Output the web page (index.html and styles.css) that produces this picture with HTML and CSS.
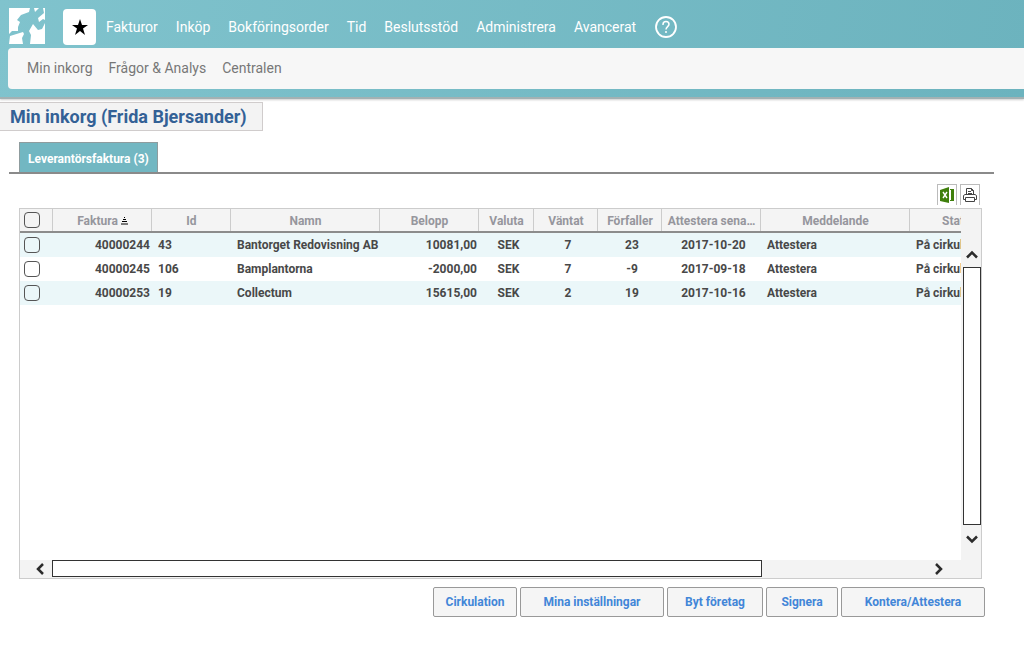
FILE: index.html
```html
<!DOCTYPE html>
<html lang="sv">
<head>
<meta charset="utf-8">
<title>Min inkorg</title>
<link rel="stylesheet" href="styles.css">
</head>
<body>
<header class="header">
  <div class="topbar">
    <svg class="logo" viewBox="0 0 36 36" aria-hidden="true">
      <path fill="#fff" d="M0 0H21L20 4L12 7L8 12L11 14L9 19V23L3 23L0 26ZM1 28L14 24L15 26L13 30L14 36H0ZM21 36L22 27L20 23L24 16L29 22L33 21L36 15V36ZM25 0H30L26 4ZM34 0H36V12L34 11L30 14L29 10L35 5Z"/>
    </svg>
    <button class="favorite" type="button" aria-label="Favoriter">
      <svg viewBox="0 0 18 18" width="18" height="18" aria-hidden="true"><path d="M9 1L11 7H17L12 10.500L14 17L9 13L4 17L6 10.500L1 7H7Z"/></svg>
    </button>
    <nav class="menu">
      <a href="#">Fakturor</a>
      <a href="#">Inköp</a>
      <a href="#">Bokföringsorder</a>
      <a href="#">Tid</a>
      <a href="#">Beslutsstöd</a>
      <a href="#">Administrera</a>
      <a href="#">Avancerat</a>
    </nav>
    <button class="help" type="button" aria-label="Hjälp">
      <svg viewBox="0 0 22 22" width="22" height="22" fill="none" stroke="#fff" aria-hidden="true"><circle cx="11" cy="11" r="10" stroke-width="1.800"/><path stroke-width="1.500" d="M8 9V8.500C8 4.500 14 4.700 14 8.300C14 10.500 11 10.800 11 13.500M11 15V17"/></svg>
    </button>
  </div>
  <nav class="submenu">
    <a href="#">Min inkorg</a>
    <a href="#">Frågor &amp; Analys</a>
    <a href="#">Centralen</a>
  </nav>
</header>
<main>
  <h1 class="title">Min inkorg (Frida Bjersander)</h1>
  <div class="tabs"><button class="tab" type="button">Leverantörsfaktura (3)</button></div>
  <section class="panel">
    <div class="tools">
      <button class="tool" type="button" aria-label="Exportera till Excel">
        <svg viewBox="0 0 16 16" width="16" height="16" aria-hidden="true"><path fill="#3f7f0c" d="M1 3L10 0V16L1 14ZM11 2H15V14H11Z"/><path fill="#fff" d="M11 3H12V13H11Z"/><path stroke="#fff" stroke-width="1.400" d="M4 5L8 11M8 5L4 11"/></svg>
      </button>
      <button class="tool" type="button" aria-label="Skriv ut">
        <svg viewBox="0 0 16 16" width="16" height="16" fill="none" stroke="#444" aria-hidden="true"><path d="M4.500 7.500V1.500H9.500L11.500 3.500V7.500M9.500 1.500V3.500H11.500M6 4.500H9M6 6.500H10M3.500 12.500H1.500V8.500L3 7.500H13L14.500 8.500V12.500H12.500M3.500 14.500V10.500H12.500V14.500Z"/></svg>
      </button>
    </div>
    <div class="grid">
      <div class="view">
        <div class="rows">
          <table class="table">
            <colgroup><col class="c-check"><col class="c-amount"><col class="c-id"><col class="c-name"><col class="c-amount"><col class="c-currency"><col class="c-wait"><col class="c-wait"><col class="c-amount"><col class="c-name"><col class="c-status"></colgroup>
            <thead>
              <tr><th><input type="checkbox" aria-label="Markera alla"></th><th>Faktura <svg class="sort" viewBox="0 0 7 8" width="7" height="8" aria-hidden="true"><path stroke="#000" d="M3 .5H4M2 2.500H5M1 4.500H6M0 7H7"/></svg></th><th>Id</th><th>Namn</th><th>Belopp</th><th>Valuta</th><th>Väntat</th><th>Förfaller</th><th>Attestera sena…</th><th>Meddelande</th><th>Status</th></tr>
            </thead>
            <tbody>
              <tr><td><input type="checkbox" aria-label="Markera 40000244"></td><td class="num">40000244</td><td>43</td><td>Bantorget Redovisning AB</td><td class="num">10081,00</td><td class="mid">SEK</td><td class="mid">7</td><td class="mid">23</td><td class="mid">2017-10-20</td><td>Attestera</td><td>På cirkulation</td></tr>
              <tr><td><input type="checkbox" aria-label="Markera 40000245"></td><td class="num">40000245</td><td>106</td><td>Bamplantorna</td><td class="num">-2000,00</td><td class="mid">SEK</td><td class="mid">7</td><td class="mid">-9</td><td class="mid">2017-09-18</td><td>Attestera</td><td>På cirkulation</td></tr>
              <tr><td><input type="checkbox" aria-label="Markera 40000253"></td><td class="num">40000253</td><td>19</td><td>Collectum</td><td class="num">15615,00</td><td class="mid">SEK</td><td class="mid">2</td><td class="mid">19</td><td class="mid">2017-10-16</td><td>Attestera</td><td>På cirkulation</td></tr>
            </tbody>
          </table>
        </div>
        <div class="hbar">
          <button class="arrow" type="button" aria-label="Vänster"><svg viewBox="0 0 12 12" width="12" height="12"><path d="M9 1L4 6L9 11"/></svg></button>
          <div class="htrack"><div class="hthumb"></div></div>
          <button class="arrow" type="button" aria-label="Höger"><svg viewBox="0 0 12 12" width="12" height="12"><path d="M3 1L8 6L3 11"/></svg></button>
        </div>
      </div>
      <div class="vbar">
        <button class="arrow" type="button" aria-label="Upp"><svg viewBox="0 0 12 12" width="12" height="12"><path d="M1 8.500L6 3.500L11 8.500"/></svg></button>
        <div class="vthumb"></div>
        <button class="arrow" type="button" aria-label="Ner"><svg viewBox="0 0 12 12" width="12" height="12"><path d="M1 3.500L6 8.500L11 3.500"/></svg></button>
      </div>
    </div>
  </section>
  <div class="actions">
    <button class="action" type="button">Cirkulation</button>
    <button class="action wide" type="button">Mina inställningar</button>
    <button class="action medium" type="button">Byt företag</button>
    <button class="action narrow" type="button">Signera</button>
    <button class="action wide" type="button">Kontera/Attestera</button>
  </div>
</main>
</body>
</html>
```

FILE: styles.css
```css
* { box-sizing: border-box; }
body { margin: 0; background: #fff; font-family: Roboto, "Liberation Sans", sans-serif; }
button { font-family: inherit; padding: 0; cursor: pointer; }
a { text-decoration: none; }
svg { display: block; }

.header {
  padding: 8px 0 8px 8px;
  background: linear-gradient(100deg, #80c3cd, #6cb3be);
  border-bottom: 2px solid #a3b1b3;
  box-shadow: 0 1px 2px #ccc;
}
.topbar { display: flex; align-items: center; height: 40px; padding-left: 1px; }
.logo { width: 36px; height: 36px; margin-bottom: 4px; }
.favorite {
  display: flex; align-items: center; justify-content: center;
  width: 33px; height: 36px; margin: 0 10px 2px 18px;
  background: #fff; border: 0; border-radius: 4px;
}
.menu { display: flex; gap: 18px; }
.menu a { color: #fff; font-size: 14px; line-height: 20px; margin-bottom: 2px; }
.help { margin: 0 0 3px 19px; border: 0; background: none; }
.submenu {
  display: flex; align-items: center; gap: 16px; height: 41px; padding: 0 0 1px 19px;
  background: #f7f7f7; border-radius: 4px 0 0 4px;
}
.submenu a { color: #777; font-size: 14px; }

.title {
  width: fit-content; margin: 3px 0 11px; padding: 0 15px 0 10px;
  font-size: 18px; font-weight: 700; line-height: 27px; color: #336196;
  background: #f3f3f3; border: 1px solid #d0cccc; border-left: 0;
}
.tabs { display: flex; margin: 0 30px 0 9px; padding-left: 10px; border-bottom: 2px solid #8a8a8a; }
.tab {
  height: 30px; padding: 2px 8px 0; color: #fff; background: #72b7c2;
  border: 1px solid #8f9c9e; border-bottom: 0; font-size: 12px; font-weight: 700;
}

.panel { margin: 10px 42px 0 19px; }
.tools { display: flex; justify-content: flex-end; gap: 3px; padding-right: 2px; height: 24px; }
.tool { width: 20px; height: 21px; padding: 1px; border: 1px solid #bbb; border-bottom: 0; background: #fff; }
.grid { display: flex; height: 371px; border: 1px solid #ccc; }
.view { flex: 1; min-width: 0; display: flex; flex-direction: column; }
.rows { flex: 1; overflow: hidden; }
.table { width: 989px; table-layout: fixed; border-collapse: separate; border-spacing: 0; font-size: 12px; font-weight: 700; color: #484848; }
.c-check { width: 33px; }
.c-amount { width: 99px; }
.c-id { width: 79px; }
.c-name { width: 149px; }
.c-currency { width: 55px; }
.c-wait { width: 64px; }
.c-status { width: 99px; }
th, td { padding: 0 0 0 6px; overflow: hidden; white-space: nowrap; text-overflow: ellipsis; }
th { height: 24px; padding: 1px 4px 0; text-align: center; color: #96969d; background: linear-gradient(90deg, #f4f4f4 calc(100% - 1px), #ccc 0); border-bottom: 2px solid #8c8c8c; }
td { height: 24px; text-align: left; }
th:first-child, td:first-child { padding: 0 0 0 4px; text-align: left; }
tbody tr:nth-child(odd) { background: #ebf7f9; }
.table .num { padding-right: 2px; text-align: right; }
.table .mid { padding: 0 2px 0 6px; text-align: center; }
.sort { display: inline-block; }
.table input {
  appearance: none; display: block; width: 16px; height: 16px; margin: 0;
  border: 1px solid #555; border-radius: 4px; background: transparent;
}

.arrow { display: flex; align-items: center; justify-content: center; border: 0; background: none; }
.arrow path { fill: none; stroke: #2b2b2b; stroke-width: 2.5; }
.hbar { display: flex; height: 18px; background: #f3f3f3; }
.hbar .arrow { width: 32px; padding-left: 8px; }
.hbar .arrow:last-child { width: 32px; padding: 0 12px 0 0; }
.htrack { flex: 1; }
.hthumb { width: 81%; height: 17px; background: #fff; border: 1px solid #333; }
.vbar { display: flex; flex-direction: column; width: 20px; padding: 34px 0 25px 2px; background: #f3f3f3; }
.vbar .arrow { height: 24px; }
.vbar .arrow:last-child { height: 28px; }
.vthumb { flex: 1; background: #fff; border: 1px solid #333; }

.actions { display: flex; justify-content: flex-end; gap: 3px; margin: 8px 39px 0 19px; }
.action {
  width: 84px; height: 30px; color: #4286d8; background: #f5f5f5;
  border: 1px solid #999; border-radius: 2px; font-size: 12px; font-weight: 700;
}
.wide { width: 144px; }
.medium { width: 96px; }
.narrow { width: 72px; }
```
